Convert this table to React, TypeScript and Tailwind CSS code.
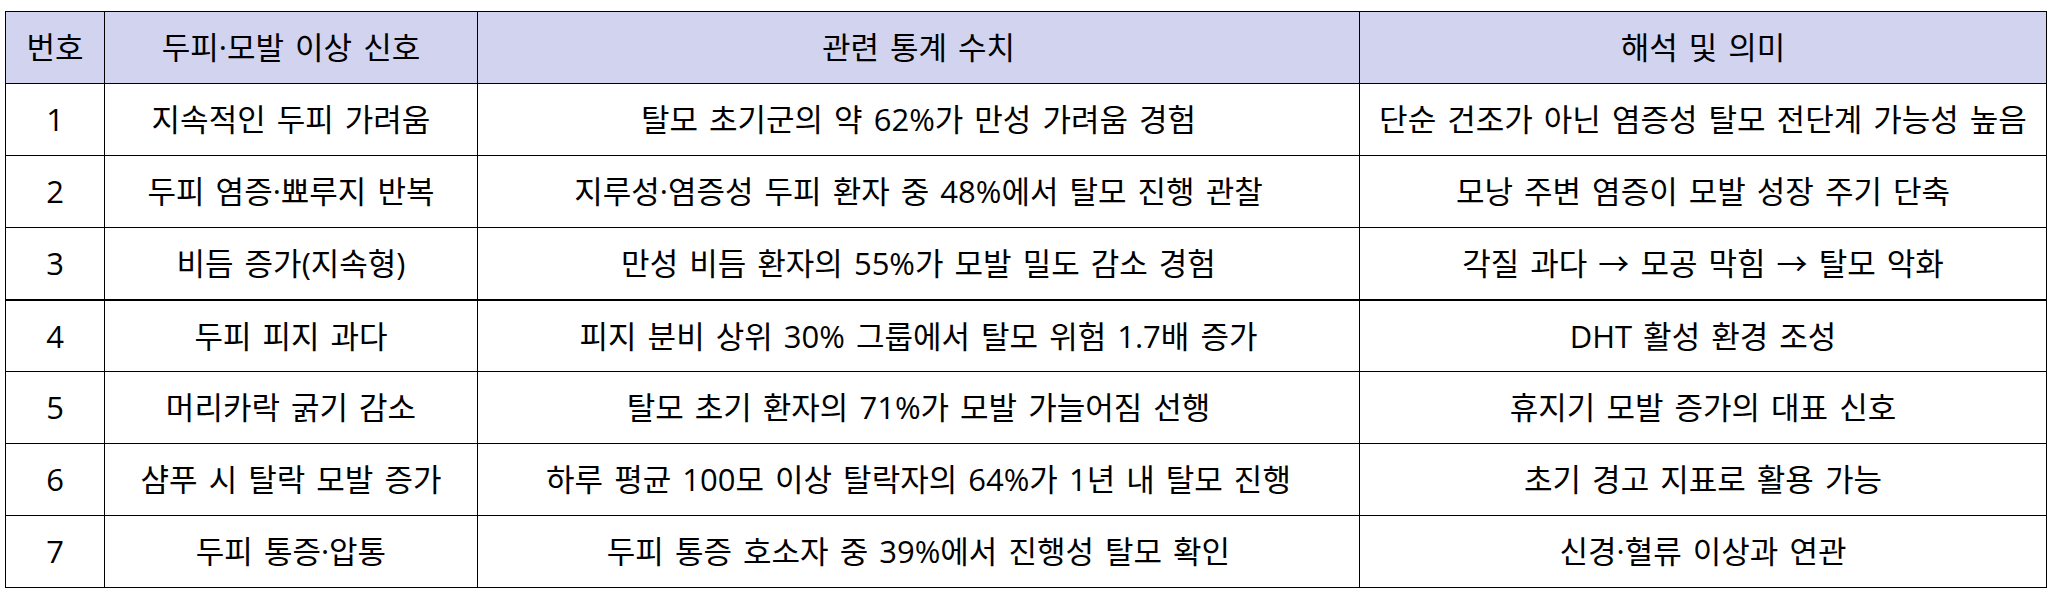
import React from 'react'

type Row = {
  no: number
  signal: string
  stat: string
  meaning: string
}

const rows: Row[] = [
  { no: 1, signal: '지속적인 두피 가려움', stat: '탈모 초기군의 약 62%가 만성 가려움 경험', meaning: '단순 건조가 아닌 염증성 탈모 전단계 가능성 높음' },
  { no: 2, signal: '두피 염증·뾰루지 반복', stat: '지루성·염증성 두피 환자 중 48%에서 탈모 진행 관찰', meaning: '모낭 주변 염증이 모발 성장 주기 단축' },
  { no: 3, signal: '비듬 증가(지속형)', stat: '만성 비듬 환자의 55%가 모발 밀도 감소 경험', meaning: '각질 과다 → 모공 막힘 → 탈모 악화' },
  { no: 4, signal: '두피 피지 과다', stat: '피지 분비 상위 30% 그룹에서 탈모 위험 1.7배 증가', meaning: 'DHT 활성 환경 조성' },
  { no: 5, signal: '머리카락 굵기 감소', stat: '탈모 초기 환자의 71%가 모발 가늘어짐 선행', meaning: '휴지기 모발 증가의 대표 신호' },
  { no: 6, signal: '샴푸 시 탈락 모발 증가', stat: '하루 평균 100모 이상 탈락자의 64%가 1년 내 탈모 진행', meaning: '초기 경고 지표로 활용 가능' },
  { no: 7, signal: '두피 통증·압통', stat: '두피 통증 호소자 중 39%에서 진행성 탈모 확인', meaning: '신경·혈류 이상과 연관' },
]

const cell = 'border border-black text-center align-middle px-2 whitespace-nowrap'

export default function App() {
  return (
    <div className="w-[2054px] h-[598px] bg-white pt-[11px] pl-[5px] font-['Open_Sans','Noto_Sans_CJK_KR',sans-serif] text-[31px] text-black [word-spacing:3px]">
      <table className="border-collapse table-fixed w-[2041px]">
        <colgroup>
          <col className="w-[99px]" />
          <col className="w-[373px]" />
          <col className="w-[882px]" />
          <col className="w-[687px]" />
        </colgroup>
        <thead>
          <tr className="h-[72px] bg-[#d1d3ef]">
            <th className={`${cell} font-normal`}>번호</th>
            <th className={`${cell} font-normal`}>두피·모발 이상 신호</th>
            <th className={`${cell} font-normal`}>관련 통계 수치</th>
            <th className={`${cell} font-normal`}>해석 및 의미</th>
          </tr>
        </thead>
        <tbody>
          {rows.map((r) => (
            <tr key={r.no} className={r.no === 3 ? 'h-[72px] border-b-2 border-black' : 'h-[72px]'}>
              <td className={cell}>{r.no}</td>
              <td className={cell}>{r.signal}</td>
              <td className={cell}>{r.stat}</td>
              <td className={cell}>{r.meaning}</td>
            </tr>
          ))}
        </tbody>
      </table>
    </div>
  )
}
